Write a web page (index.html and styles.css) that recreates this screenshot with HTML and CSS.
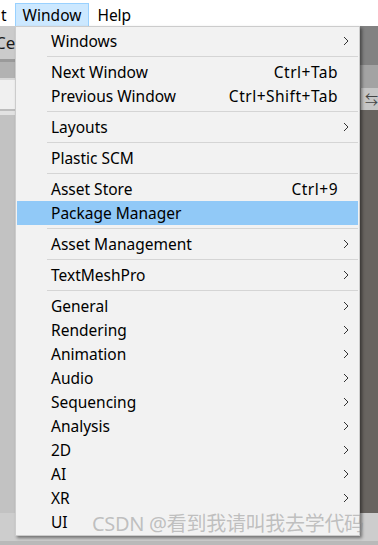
FILE: index.html
```html
<!DOCTYPE html>
<html lang="en">
<head>
    <meta charset="UTF-8">
    <title>Window Menu</title>
    <link rel="stylesheet" href="styles.css">
</head>
<body>
    <!-- Top menu bar -->
    <div class="menubar">
        <span class="menubar-item cut">t</span>
        <span class="menubar-item open">Window</span>
        <span class="menubar-item">Help</span>
    </div>

    <!-- Editor panels behind the menu -->
    <div class="workspace">
        <div class="left-panel">
            <div class="band tab-strip">Ce</div>
            <div class="band dark-line"></div>
            <div class="band toolbar"></div>
            <div class="band toolbar-edge"></div>
            <div class="band search-row"></div>
            <div class="band search-edge"></div>
            <div class="band search-pad"></div>
            <div class="band panel-body"></div>
            <div class="band status"></div>
        </div>
        <div class="right-panel">
            <div class="band scene-tab"></div>
            <div class="band scene-bar"></div>
            <div class="band scene-tools"><span class="tool-glyph">⇆</span></div>
            <div class="band scene-view"></div>
            <div class="band status"></div>
        </div>
    </div>

    <!-- Window dropdown -->
    <div class="menu">
        <div class="menu-item">Windows<span class="arrow"></span></div>
        <div class="separator"></div>
        <div class="menu-item">Next Window<span class="shortcut">Ctrl+Tab</span><span class="no-arrow"></span></div>
        <div class="menu-item">Previous Window<span class="shortcut">Ctrl+Shift+Tab</span><span class="no-arrow"></span></div>
        <div class="separator"></div>
        <div class="menu-item">Layouts<span class="arrow"></span></div>
        <div class="separator"></div>
        <div class="menu-item">Plastic SCM</div>
        <div class="separator"></div>
        <div class="menu-item">Asset Store<span class="shortcut">Ctrl+9</span><span class="no-arrow"></span></div>
        <div class="menu-item active">Package Manager</div>
        <div class="separator"></div>
        <div class="menu-item">Asset Management<span class="arrow"></span></div>
        <div class="separator"></div>
        <div class="menu-item">TextMeshPro<span class="arrow"></span></div>
        <div class="separator"></div>
        <div class="menu-item">General<span class="arrow"></span></div>
        <div class="menu-item">Rendering<span class="arrow"></span></div>
        <div class="menu-item">Animation<span class="arrow"></span></div>
        <div class="menu-item">Audio<span class="arrow"></span></div>
        <div class="menu-item">Sequencing<span class="arrow"></span></div>
        <div class="menu-item">Analysis<span class="arrow"></span></div>
        <div class="menu-item">2D<span class="arrow"></span></div>
        <div class="menu-item">AI<span class="arrow"></span></div>
        <div class="menu-item">XR<span class="arrow"></span></div>
        <div class="menu-item">UI</div>
    </div>

    <!-- Watermark -->
    <div class="watermark">CSDN @看到我请叫我去学代码</div>
</body>
</html>
```

FILE: styles.css
```css
/* Base */
body, html {
    margin: 0;
    padding: 0;
    width: 378px;
    height: 545px;
    overflow: hidden;
    font-family: 'Noto Sans', 'Noto Sans CJK SC', sans-serif;
    font-size: 15.5px;
    color: #000;
    background: #fff;
}

body {
    position: relative;
    display: flex;
    flex-direction: column;
}

/* Menu bar */
.menubar {
    height: 26px;
    display: flex;
    align-items: flex-end;
    background: #fff;
}

.menubar-item {
    height: 23px;
    line-height: 22px;
    padding: 0 7px;
    box-sizing: border-box;
    border: 1px solid transparent;
    border-bottom: none;
}

.menubar-item.cut {
    padding: 0 7px 0 0;
}

.menubar-item.open {
    background: #cce8ff;
    border-color: #99d1ff;
}

/* Panels behind */
.workspace {
    flex: 1;
    display: flex;
}

.left-panel,
.right-panel {
    display: flex;
    flex-direction: column;
}

.left-panel {
    width: 190px;
}

.right-panel {
    flex: 1;
}

.band {
    flex-shrink: 0;
}

.tab-strip {
    height: 33px;
    background: #cbcbcb;
    line-height: 33px;
    font-size: 17px;
    text-indent: -5px;
    color: #1a1a1a;
}

.dark-line { height: 3px; background: #9a9a9a; }
.toolbar { height: 16px; background: #b2b2b2; }
.toolbar-edge { height: 2px; background: #d8d8d8; }
.search-row { height: 29px; background: #f0f0f0; }
.search-edge { height: 2px; background: #bdbdbd; }
.search-pad { height: 4px; background: #e2e2e2; }
.panel-body { flex: 1; background: #c2c2c2; }

.status {
    height: 32px;
    background: #cdcdcd;
    border-bottom: 4px solid #b9b9b9;
    box-sizing: border-box;
}

.scene-tab { height: 39px; background: #828282; }
.scene-bar { height: 23px; background: #a3a3a3; }

.scene-tools {
    height: 22px;
    background: #c6c6c6;
    border-left: 1px solid #9c9c9c;
    margin-left: 195px;
    padding-left: 4px;
    font-size: 13px;
    line-height: 22px;
    color: #444;
}

.scene-view { flex: 1; background: #686460; }

/* Dropdown */
.menu {
    position: absolute;
    top: 26px;
    left: 15px;
    width: 345px;
    box-sizing: border-box;
    padding: 2px 1px 1px 1px;
    background: #f2f2f2;
    border: 1px solid #cccccc;
    box-shadow: 2px 2px 3px rgba(0, 0, 0, 0.45);
}

.menu-item {
    height: 24px;
    display: flex;
    align-items: center;
    padding-left: 34px;
    white-space: nowrap;
}

.menu-item.active {
    background: #91c9f7;
}

.shortcut {
    margin-left: auto;
    letter-spacing: 0.5px;
}

.arrow,
.no-arrow {
    width: 20px;
    height: 24px;
    flex-shrink: 0;
}

.arrow {
    margin-left: auto;
    background: url("data:image/svg+xml;utf8,<svg xmlns='http://www.w3.org/2000/svg' width='6' height='10'><polyline points='1,1 5,5 1,9' fill='none' stroke='%23333' stroke-width='1'/></svg>") no-repeat 5px 7px;
}

.separator {
    height: 1px;
    margin: 3px 0 3px 30px;
    background: #d5d5d5;
}

/* Watermark */
.watermark {
    position: absolute;
    left: 92px;
    top: 511px;
    font-size: 20px;
    line-height: 26px;
    color: rgba(140, 140, 140, 0.5);
    white-space: nowrap;
    letter-spacing: -0.3px;
}
```
